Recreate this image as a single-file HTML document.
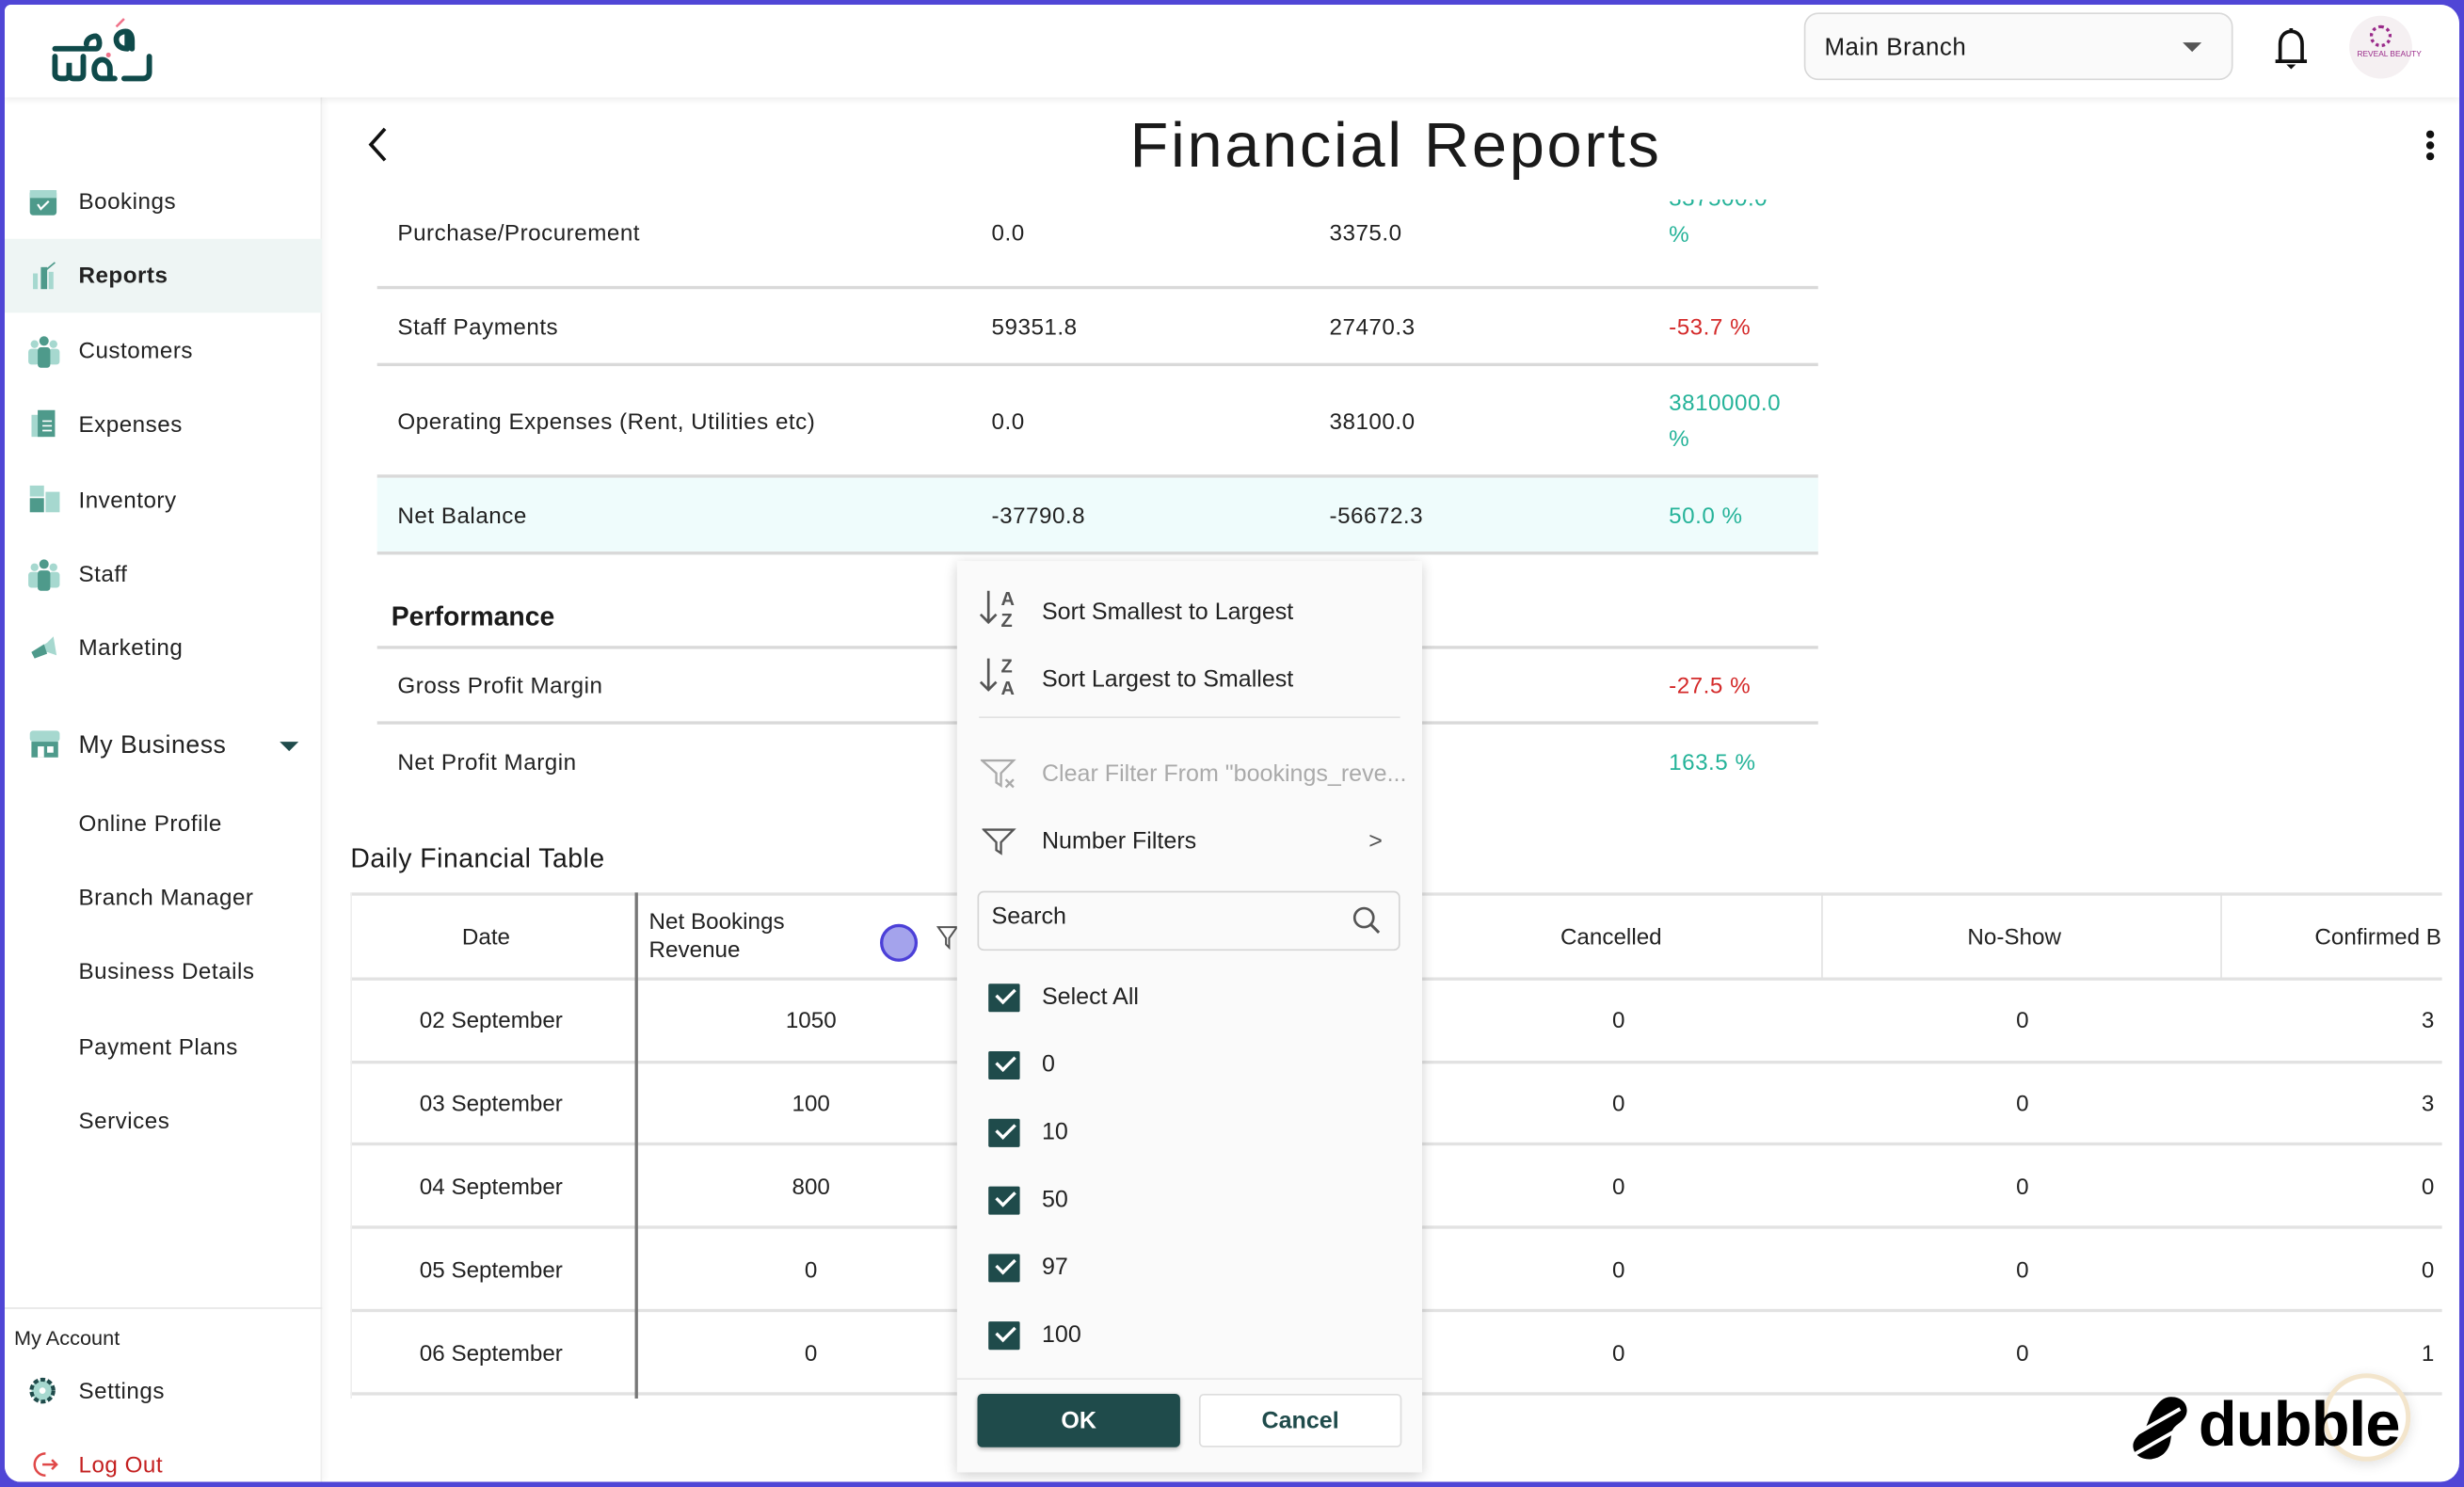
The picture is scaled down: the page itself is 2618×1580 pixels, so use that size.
<!DOCTYPE html>
<html><head><meta charset="utf-8"><style>
*{margin:0;padding:0;box-sizing:border-box}
html,body{width:2618px;height:1580px;overflow:hidden;background:#5046d6}
#w{position:absolute;left:0;top:0;width:1568px;height:946.3px;transform:scale(1.66964);transform-origin:0 0;font-family:"Liberation Sans",sans-serif;color:#1a1a1a}
#frame{position:absolute;left:3px;top:3px;width:1562px;height:940px;background:#fff;border-radius:4px 12px 12px 10px;overflow:hidden}
.a{position:absolute;white-space:nowrap}
.t{position:absolute;white-space:nowrap;line-height:20px;font-size:15px;margin-top:1px}
.hl{position:absolute;height:2px;background:#d9d9d9}
.gl{position:absolute;height:1px;background:#e2e2e2}
.vl{position:absolute;width:1px;background:#e2e2e2}
.side{font-size:14.5px;letter-spacing:.3px;color:#222}
.g{color:#25b399}.r{color:#d42a2a}
.rb{font-family:"Liberation Sans",sans-serif;font-size:14.5px;color:#222}
.cb{position:absolute;left:20px;width:20px;height:18px;background:#1f4b4b;border-radius:1px}
.cb:after{content:"";position:absolute;left:5px;top:3px;width:10px;height:5px;border-left:2px solid #fff;border-bottom:2px solid #fff;transform:rotate(-45deg)}
</style></head><body><div id="w"><div id="frame">
<!-- header -->
<div class="a" style="left:0;top:0;width:1562px;height:59px;background:#fff;box-shadow:0 2px 4px rgba(0,0,0,.07);z-index:2">
<svg class="a" style="left:28px;top:8px" width="72" height="42" viewBox="0 0 72 42">
<g fill="none" stroke="#0f4a4a" stroke-width="3.5" stroke-linecap="round">
<path d="M4 20H30c3 0 3-7 0-8-3 0-6 2-6 5"/><path d="M50 20c-5 0-7-3-7-6s3-5 6-5 4 3 4 6v5"/><path d="M50 10v10"/>
<path d="M4 25v11c0 2 2 3 4 3h2c2 0 3-1 3-3v-7 7c0 2 1 3 3 3h3c2 0 3-1 3-3v-11"/>
<path d="M42 39h-8c-4 0-5-3-5-6s2-6 5-6 5 3 5 6v6"/><path d="M64 25v10c0 3-2 4-4 4h-12"/></g>
<path d="M43 6l5-5" stroke="#f0728a" stroke-width="1.5"/><circle cx="38" cy="24" r="1.5" fill="#f0728a"/></svg>
<div class="a" style="left:1145px;top:5px;width:273px;height:43px;background:#fafafa;border:1px solid #d8d8d8;border-radius:9px"></div>
<div class="t" style="left:1158px;top:17px;font-size:15.5px;letter-spacing:.3px">Main Branch</div>
<div class="a" style="left:1386px;top:24px;width:0;height:0;border-left:6px solid transparent;border-right:6px solid transparent;border-top:6px solid #555"></div>
<svg class="a" style="left:1443px;top:13px" width="24" height="30" viewBox="0 0 24 30"><path d="M12 2v2M5 22V12c0-5 3-8 7-8s7 3 7 8v10M2 23h20" fill="none" stroke="#111" stroke-width="2.2"/><path d="M9 25h6l-3 3z" fill="#111"/></svg>
<div class="a" style="left:1492px;top:7px;width:40px;height:40px;border-radius:50%;background:#f5f0f2"></div>
<div class="a" style="left:1505px;top:13px;width:14px;height:14px;border-radius:50%;border:2px dotted #9a2a8a"></div>
<div class="a" style="left:1497px;top:29px;font-size:5px;color:#9a2a8a">REVEAL BEAUTY</div>
</div>
<!-- sidebar -->
<div class="a" style="left:0;top:59px;width:202px;height:881px;background:#fff;border-right:1px solid #eee;box-shadow:2px 0 4px rgba(0,0,0,.04)"></div>
<div class="a" style="left:0;top:149px;width:202px;height:47px;background:#eef5f4"></div>
<svg class="a" style="left:15px;top:115px" width="20" height="20"><rect x="1" y="3" width="17" height="16" rx="2" fill="#4e9a8b"/><rect x="1" y="3" width="17" height="5" fill="#a6d8cf"/><path d="M6 12l2 3 5-5" stroke="#fff" stroke-width="1.3" fill="none"/></svg>
<svg class="a" style="left:17px;top:163px" width="18" height="20"><rect x="1" y="8" width="3" height="10" fill="#a6d8cf"/><rect x="6" y="4" width="4" height="14" fill="#4e9a8b"/><rect x="11" y="7" width="3" height="11" fill="#a6d8cf"/><path d="M9 6l6-5" stroke="#4e9a8b"/></svg>
<svg class="a" style="left:15px;top:210px" width="20" height="22"><circle cx="4" cy="6" r="2.5" fill="#a6d8cf"/><circle cx="16" cy="6" r="2.5" fill="#a6d8cf"/><circle cx="10" cy="4" r="3" fill="#4e9a8b"/><rect x="0" y="9" width="7" height="10" rx="2" fill="#a6d8cf"/><rect x="13" y="9" width="7" height="10" rx="2" fill="#a6d8cf"/><rect x="6" y="8" width="8" height="13" rx="2" fill="#4e9a8b"/></svg>
<svg class="a" style="left:17px;top:257px" width="18" height="22"><rect x="0" y="4" width="8" height="14" fill="#a6d8cf"/><rect x="4" y="1" width="11" height="17" fill="#4e9a8b"/><path d="M7 8h6M7 11h6M7 14h6" stroke="#fff"/></svg>
<svg class="a" style="left:15px;top:305px" width="22" height="22"><rect x="1" y="1" width="9" height="7" fill="#a6d8cf"/><rect x="1" y="9" width="9" height="9" fill="#4e9a8b"/><rect x="11" y="5" width="9" height="13" fill="#a6d8cf"/></svg>
<svg class="a" style="left:15px;top:352px" width="22" height="22"><circle cx="4" cy="6" r="2.5" fill="#a6d8cf"/><circle cx="16" cy="6" r="2.5" fill="#a6d8cf"/><circle cx="10" cy="4" r="3" fill="#4e9a8b"/><rect x="0" y="9" width="7" height="10" rx="2" fill="#a6d8cf"/><rect x="13" y="9" width="7" height="10" rx="2" fill="#a6d8cf"/><rect x="6" y="8" width="8" height="13" rx="2" fill="#4e9a8b"/></svg>
<svg class="a" style="left:15px;top:400px" width="22" height="22"><path d="M2 12l10-6 4-4 2 12-6-2-8 4z" fill="#a6d8cf"/><path d="M2 12l8-5 2 6-8 3z" fill="#4e9a8b"/></svg>
<svg class="a" style="left:15px;top:460px" width="22" height="22"><rect x="1" y="2" width="19" height="7" rx="2" fill="#a6d8cf"/><rect x="2" y="9" width="17" height="10" fill="#4e9a8b"/><rect x="6" y="12" width="4" height="7" fill="#fff"/><rect x="12" y="12" width="4" height="4" fill="#fff"/></svg>
<div class="t side" style="left:47px;top:115px">Bookings</div>
<div class="t side" style="left:47px;top:162px;font-weight:bold">Reports</div>
<div class="t side" style="left:47px;top:210px">Customers</div>
<div class="t side" style="left:47px;top:257px">Expenses</div>
<div class="t side" style="left:47px;top:305px">Inventory</div>
<div class="t side" style="left:47px;top:352px">Staff</div>
<div class="t side" style="left:47px;top:399px">Marketing</div>
<div class="t side" style="left:47px;top:461px;font-size:16px;font-weight:500">My Business</div>
<div class="a" style="left:175px;top:469px;border-left:6px solid transparent;border-right:6px solid transparent;border-top:6px solid #1f4b4b"></div>
<div class="t side" style="left:47px;top:511px">Online Profile</div>
<div class="t side" style="left:47px;top:558px">Branch Manager</div>
<div class="t side" style="left:47px;top:605px">Business Details</div>
<div class="t side" style="left:47px;top:653px">Payment Plans</div>
<div class="t side" style="left:47px;top:700px">Services</div>
<div class="a" style="left:0;top:829px;width:202px;height:1px;background:#e6e6e6"></div>
<div class="t" style="left:6px;top:838px;font-size:13px;color:#222">My Account</div>
<svg class="a" style="left:14px;top:872px" width="20" height="20"><circle cx="10" cy="10" r="7" fill="#a6d8cf" stroke="#1f4b4b" stroke-width="2.5" stroke-dasharray="3 1.5"/><circle cx="10" cy="10" r="2" fill="#fff"/></svg>
<div class="t side" style="left:47px;top:872px">Settings</div>
<svg class="a" style="left:17px;top:920px" width="18" height="18"><path d="M9 2a7 7 0 1 0 0 14" fill="none" stroke="#e04848" stroke-width="1.5"/><path d="M7 9h9M13 6l3 3-3 3" fill="none" stroke="#e04848" stroke-width="1.5"/></svg>
<div class="t side" style="left:47px;top:919px;color:#c42020">Log Out</div>
<!-- main -->
<svg class="a" style="left:228px;top:76px" width="18" height="26"><path d="M14 3L5 13l9 10" fill="none" stroke="#111" stroke-width="2.2"/></svg>
<div class="a" style="left:716px;top:65px;font-size:40px;line-height:50px;font-weight:500;letter-spacing:1.6px">Financial Reports</div>
<div class="a" style="left:1541px;top:80px;width:5px;height:5px;border-radius:50%;background:#111;box-shadow:0 7px 0 #111,0 14px 0 #111"></div>
<div class="a" style="left:237px;top:301px;width:917px;height:49px;background:#effcfc"></div>
<div class="hl" style="left:237px;top:179px;width:917px"></div>
<div class="hl" style="left:237px;top:228px;width:917px"></div>
<div class="hl" style="left:237px;top:299px;width:917px"></div>
<div class="hl" style="left:237px;top:348px;width:917px"></div>
<div class="t side" style="left:250px;top:135px">Purchase/Procurement</div>
<div class="t side" style="left:628px;top:135px">0.0</div><div class="t side" style="left:843px;top:135px">3375.0</div>
<div class="a side g" style="left:1059px;top:124px;line-height:23px;height:46px;overflow:hidden;font-size:14.5px"><div style="margin-top:-11px">337500.0<br>%</div></div>
<div class="t side" style="left:250px;top:195px">Staff Payments</div>
<div class="t side" style="left:628px;top:195px">59351.8</div><div class="t side" style="left:843px;top:195px">27470.3</div><div class="t side r" style="left:1059px;top:195px">-53.7 %</div>
<div class="t side" style="left:250px;top:255px">Operating Expenses (Rent, Utilities etc)</div>
<div class="t side" style="left:628px;top:255px">0.0</div><div class="t side" style="left:843px;top:255px">38100.0</div>
<div class="a side g" style="left:1059px;top:243px;line-height:23px">3810000.0<br>%</div>
<div class="t side" style="left:250px;top:315px">Net Balance</div>
<div class="t side" style="left:628px;top:315px">-37790.8</div><div class="t side" style="left:843px;top:315px">-56672.3</div><div class="t side g" style="left:1059px;top:315px">50.0 %</div>
<div class="t" style="left:246px;top:379px;font-size:17px;font-weight:bold">Performance</div>
<div class="hl" style="left:237px;top:408px;width:917px"></div>
<div class="hl" style="left:237px;top:456px;width:917px"></div>
<div class="t side" style="left:250px;top:423px">Gross Profit Margin</div><div class="t side r" style="left:1059px;top:423px">-27.5 %</div>
<div class="t side" style="left:250px;top:472px">Net Profit Margin</div><div class="t side g" style="left:1059px;top:472px">163.5 %</div>
<div class="t" style="left:220px;top:533px;font-size:17px;letter-spacing:.3px">Daily Financial Table</div>
<!-- grid -->
<div class="gl" style="left:220px;top:565px;width:1331px;height:2px"></div>
<div class="gl" style="left:220px;top:619px;width:1331px;height:2px"></div>
<div class="gl" style="left:220px;top:672px;width:1331px;height:2px"></div>
<div class="gl" style="left:220px;top:724px;width:1331px;height:2px"></div>
<div class="gl" style="left:220px;top:777px;width:1331px;height:2px"></div>
<div class="gl" style="left:220px;top:830px;width:1331px;height:2px"></div>
<div class="gl" style="left:220px;top:883px;width:1331px;height:2px"></div>
<div class="vl" style="left:220px;top:565px;height:322px;background:#eee"></div>
<div class="vl" style="left:401px;top:565px;height:322px;width:2px;background:#777"></div>
<div class="vl" style="left:1156px;top:565px;height:55px"></div>
<div class="vl" style="left:1410px;top:565px;height:55px"></div>
<div class="t rb" style="left:291px;top:583px">Date</div>
<div class="a rb" style="left:410px;top:575px;line-height:18px">Net Bookings<br>Revenue</div>
<div class="a" style="left:557px;top:585px;width:24px;height:24px;border-radius:50%;background:#a4a3ec;border:2.5px solid #4c40d8"></div>
<svg class="a" style="left:593px;top:586px" width="14" height="16"><path d="M1 1h12L8 8v6L6 12V8z" fill="none" stroke="#555" stroke-width="1.2"/></svg>
<div class="t rb" style="left:990px;top:583px">Cancelled</div>
<div class="t rb" style="left:1249px;top:583px">No-Show</div>
<div class="t rb" style="left:1470px;top:583px">Confirmed B</div>
<div class="t rb" style="left:264px;top:636px">02 September</div><div class="t rb" style="left:497px;top:636px">1050</div>
<div class="t rb" style="left:264px;top:689px">03 September</div><div class="t rb" style="left:501px;top:689px">100</div>
<div class="t rb" style="left:264px;top:742px">04 September</div><div class="t rb" style="left:501px;top:742px">800</div>
<div class="t rb" style="left:264px;top:795px">05 September</div><div class="t rb" style="left:509px;top:795px">0</div>
<div class="t rb" style="left:264px;top:848px">06 September</div><div class="t rb" style="left:509px;top:848px">0</div>
<div class="t rb" style="left:1023px;top:636px">0</div><div class="t rb" style="left:1280px;top:636px">0</div><div class="t rb" style="left:1538px;top:636px">3</div>
<div class="t rb" style="left:1023px;top:689px">0</div><div class="t rb" style="left:1280px;top:689px">0</div><div class="t rb" style="left:1538px;top:689px">3</div>
<div class="t rb" style="left:1023px;top:742px">0</div><div class="t rb" style="left:1280px;top:742px">0</div><div class="t rb" style="left:1538px;top:742px">0</div>
<div class="t rb" style="left:1023px;top:795px">0</div><div class="t rb" style="left:1280px;top:795px">0</div><div class="t rb" style="left:1538px;top:795px">0</div>
<div class="t rb" style="left:1023px;top:848px">0</div><div class="t rb" style="left:1280px;top:848px">0</div><div class="t rb" style="left:1538px;top:848px">1</div>
<!-- popup -->
<div class="a" style="left:606px;top:354px;width:296px;height:580px;background:#fafafa;box-shadow:0 2px 8px rgba(0,0,0,.2);font-family:'Liberation Sans',sans-serif;font-size:14.5px;color:#222">
<svg class="a" style="left:14px;top:17px" width="28" height="28"><path d="M6 2v20M1 17l5 5 5-5" fill="none" stroke="#555" stroke-width="1.6"/><text x="14" y="11" font-size="12" font-weight="bold" fill="#555" font-family="Liberation Sans">A</text><text x="14" y="25" font-size="12" font-weight="bold" fill="#555" font-family="Liberation Sans">Z</text></svg>
<div class="t" style="left:54px;top:22px">Sort Smallest to Largest</div>
<svg class="a" style="left:14px;top:60px" width="28" height="28"><path d="M6 2v20M1 17l5 5 5-5" fill="none" stroke="#555" stroke-width="1.6"/><text x="14" y="11" font-size="12" font-weight="bold" fill="#555" font-family="Liberation Sans">Z</text><text x="14" y="25" font-size="12" font-weight="bold" fill="#555" font-family="Liberation Sans">A</text></svg>
<div class="t" style="left:54px;top:65px">Sort Largest to Smallest</div>
<div class="a" style="left:14px;top:99px;width:268px;height:1px;background:#e2e2e2"></div>
<svg class="a" style="left:15px;top:125px" width="26" height="22"><path d="M1 2h20l-8 8v8l-3-2v-6z" fill="none" stroke="#aaa" stroke-width="1.4"/><path d="M16 14l5 5M21 14l-5 5" stroke="#aaa" stroke-width="1.4"/></svg>
<div class="t" style="left:54px;top:125px;color:#aaa">Clear Filter From "bookings_reve...</div>
<svg class="a" style="left:16px;top:169px" width="22" height="20"><path d="M1 2h19l-8 8v7l-3-2v-5z" fill="none" stroke="#555" stroke-width="1.4"/></svg>
<div class="t" style="left:54px;top:168px">Number Filters</div>
<div class="t" style="left:262px;top:168px;color:#555">&gt;</div>
<div class="a" style="left:13px;top:210px;width:269px;height:38px;border:1px solid #d5d5d5;border-radius:4px;background:#fafafa"></div>
<div class="t" style="left:22px;top:216px">Search</div>
<svg class="a" style="left:251px;top:219px" width="20" height="20"><circle cx="8" cy="8" r="6" fill="none" stroke="#555" stroke-width="1.6"/><path d="M12.5 12.5l5 5" stroke="#555" stroke-width="1.8"/></svg>
<div class="cb" style="top:269px"></div><div class="t" style="left:54px;top:267px">Select All</div>
<div class="cb" style="top:312px"></div><div class="t" style="left:54px;top:310px">0</div>
<div class="cb" style="top:355px"></div><div class="t" style="left:54px;top:353px">10</div>
<div class="cb" style="top:398px"></div><div class="t" style="left:54px;top:396px">50</div>
<div class="cb" style="top:441px"></div><div class="t" style="left:54px;top:439px">97</div>
<div class="cb" style="top:484px"></div><div class="t" style="left:54px;top:482px">100</div>
<div class="a" style="left:0;top:520px;width:296px;height:1px;background:#e6e6e6"></div>
<div class="a" style="left:13px;top:530px;width:129px;height:34px;background:#1f4b4b;border-radius:3px;box-shadow:0 1px 3px rgba(0,0,0,.3);color:#fff;font-weight:bold;font-size:15px;text-align:center;line-height:36px">OK</div>
<div class="a" style="left:154px;top:530px;width:129px;height:34px;border:1px solid #ddd;border-radius:3px;background:#fff;color:#1f4b4b;font-weight:bold;font-size:15px;text-align:center;line-height:34px">Cancel</div>
</div>
<!-- dubble -->
<div class="a" style="left:1475px;top:871px;width:56px;height:56px;border-radius:50%;border:3px solid #f3e5cc;box-shadow:0 2px 8px rgba(0,0,0,.12)"></div>
<svg class="a" style="left:1350px;top:884px" width="42" height="44" viewBox="0 0 44 46"><path d="M30 2c8 0 12 6 10 12-2 5-7 6-9 10-2 5 0 10-6 16-7 6-18 4-20-3-2-6 4-10 7-13 3-4 3-10 8-16 3-4 6-6 10-6z" fill="#000"/><path d="M8 26l28-16M6 40l28-16" stroke="#fff" stroke-width="2.5"/></svg>
<div class="a" style="left:1396px;top:878px;font-size:40px;line-height:52px;font-weight:bold;letter-spacing:-.5px;color:#000">dubble</div>
</div></div></body></html>
